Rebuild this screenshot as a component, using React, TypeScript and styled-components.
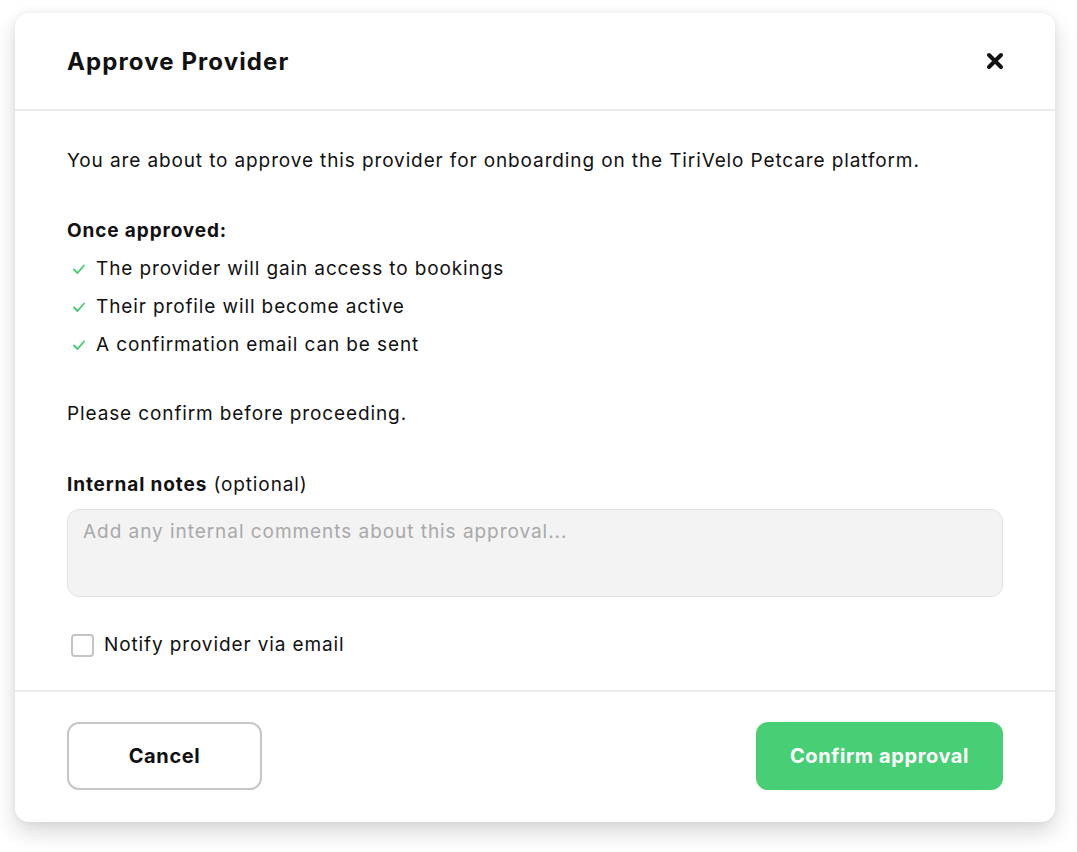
import React, { useState } from "react";
import styled, { createGlobalStyle } from "styled-components";

const GlobalStyle = createGlobalStyle`
  html, body {
    margin: 0;
    padding: 0;
    background: #ffffff;
  }
  body {
    font-family: "Inter", "Liberation Sans", sans-serif;
    color: #111111;
  }
  * {
    box-sizing: border-box;
  }
`;

const Page = styled.div`
  padding: 13px 22px 30px 15px;
`;

const Modal = styled.div`
  width: 1040px;
  background: #ffffff;
  border-radius: 14px;
  box-shadow: 0 10px 22px rgba(0, 0, 0, 0.16), 0 0 6px rgba(0, 0, 0, 0.06);
  display: flex;
  flex-direction: column;
`;

const Header = styled.div`
  height: 98px;
  display: flex;
  align-items: center;
  justify-content: space-between;
  padding: 0 52px;
  border-bottom: 2px solid #ebebeb;
`;

const Title = styled.h2`
  margin: 0;
  font-size: 24px;
  font-weight: 700;
  letter-spacing: 1.1px;
  color: #111111;
`;

const CloseButton = styled.button`
  border: none;
  background: transparent;
  padding: 0;
  width: 24px;
  height: 24px;
  display: flex;
  align-items: center;
  justify-content: center;
  margin-right: -4px;
  cursor: pointer;
`;

const Body = styled.div`
  padding: 36px 52px 31px;
  display: flex;
  flex-direction: column;
  letter-spacing: 0.88px;
`;

const Text = styled.p<{ $top?: number }>`
  margin: ${(p) => p.$top ?? 0}px 0 0;
  font-size: 19px;
  line-height: 28px;
`;

const Strong = styled.span`
  font-weight: 700;
`;

const List = styled.ul`
  list-style: none;
  margin: 10px 0 0;
  padding: 0;
  display: flex;
  flex-direction: column;
  gap: 10px;
`;

const Item = styled.li`
  display: flex;
  align-items: center;
  gap: 10px;
  font-size: 19px;
  line-height: 28px;
  padding-left: 5px;
`;

const NotesLabel = styled.label`
  margin-top: 43px;
  font-size: 19px;
  line-height: 28px;
`;

const Notes = styled.textarea`
  margin-top: 10px;
  height: 88px;
  width: 100%;
  resize: none;
  background: #f3f3f3;
  border: 1px solid #e3e3e3;
  border-radius: 12px;
  padding: 9px 15px;
  font-family: inherit;
  font-size: 19px;
  line-height: 26px;
  letter-spacing: 0.95px;
  color: #111111;
  outline: none;
  &::placeholder {
    color: #a9a9a9;
  }
`;

const CheckRow = styled.label`
  margin-top: 34px;
  display: flex;
  align-items: center;
  gap: 10px;
  font-size: 19px;
  line-height: 28px;
  padding-left: 4px;
  cursor: pointer;
`;

const Box = styled.span<{ $checked: boolean }>`
  width: 23px;
  height: 23px;
  border: 2px solid #c4c4c4;
  border-radius: 4px;
  background: ${(p) => (p.$checked ? "#48cf75" : "#ffffff")};
  display: flex;
  align-items: center;
  justify-content: center;
`;

const Footer = styled.div`
  border-top: 2px solid #ebebeb;
  padding: 30px 52px 32px;
  display: flex;
  justify-content: space-between;
  align-items: center;
`;

const Button = styled.button<{ $primary?: boolean }>`
  height: 68px;
  border-radius: 12px;
  font-family: inherit;
  font-size: 20px;
  font-weight: 700;
  letter-spacing: 0.6px;
  cursor: pointer;
  width: ${(p) => (p.$primary ? "247px" : "195px")};
  color: ${(p) => (p.$primary ? "#ffffff" : "#111111")};
  background: ${(p) => (p.$primary ? "#48cf75" : "#ffffff")};
  border: ${(p) => (p.$primary ? "none" : "2px solid #c6c6c6")};
`;

const Check = () => (
  <svg width="14" height="14" viewBox="0 0 14 14" fill="none">
    <path
      d="M2 7.5 L5.5 11 L12 3.5"
      stroke="#3fcc6e"
      strokeWidth="1.8"
      strokeLinecap="round"
      strokeLinejoin="round"
    />
  </svg>
);

const CloseIcon = () => (
  <svg width="20" height="20" viewBox="0 0 20 20" fill="none">
    <path
      d="M4 4 L16 16 M16 4 L4 16"
      stroke="#111111"
      strokeWidth="4"
      strokeLinecap="round"
    />
  </svg>
);

const bullets = [
  "The provider will gain access to bookings",
  "Their profile will become active",
  "A confirmation email can be sent",
];

const App: React.FC = () => {
  const [notify, setNotify] = useState(false);

  return (
    <Page>
      <GlobalStyle />
      <Modal>
        <Header>
          <Title>Approve Provider</Title>
          <CloseButton aria-label="Close">
            <CloseIcon />
          </CloseButton>
        </Header>
        <Body>
          <Text>
            You are about to approve this provider for onboarding on the TiriVelo
            Petcare platform.
          </Text>
          <Text $top={42}>
            <Strong>Once approved:</Strong>
          </Text>
          <List>
            {bullets.map((b) => (
              <Item key={b}>
                <Check />
                {b}
              </Item>
            ))}
          </List>
          <Text $top={41}>Please confirm before proceeding.</Text>
          <NotesLabel>
            <Strong>Internal notes</Strong> (optional)
          </NotesLabel>
          <Notes placeholder="Add any internal comments about this approval..." />
          <CheckRow onClick={() => setNotify(!notify)}>
            <Box $checked={notify} />
            Notify provider via email
          </CheckRow>
        </Body>
        <Footer>
          <Button>Cancel</Button>
          <Button $primary>Confirm approval</Button>
        </Footer>
      </Modal>
    </Page>
  );
};

export default App;
